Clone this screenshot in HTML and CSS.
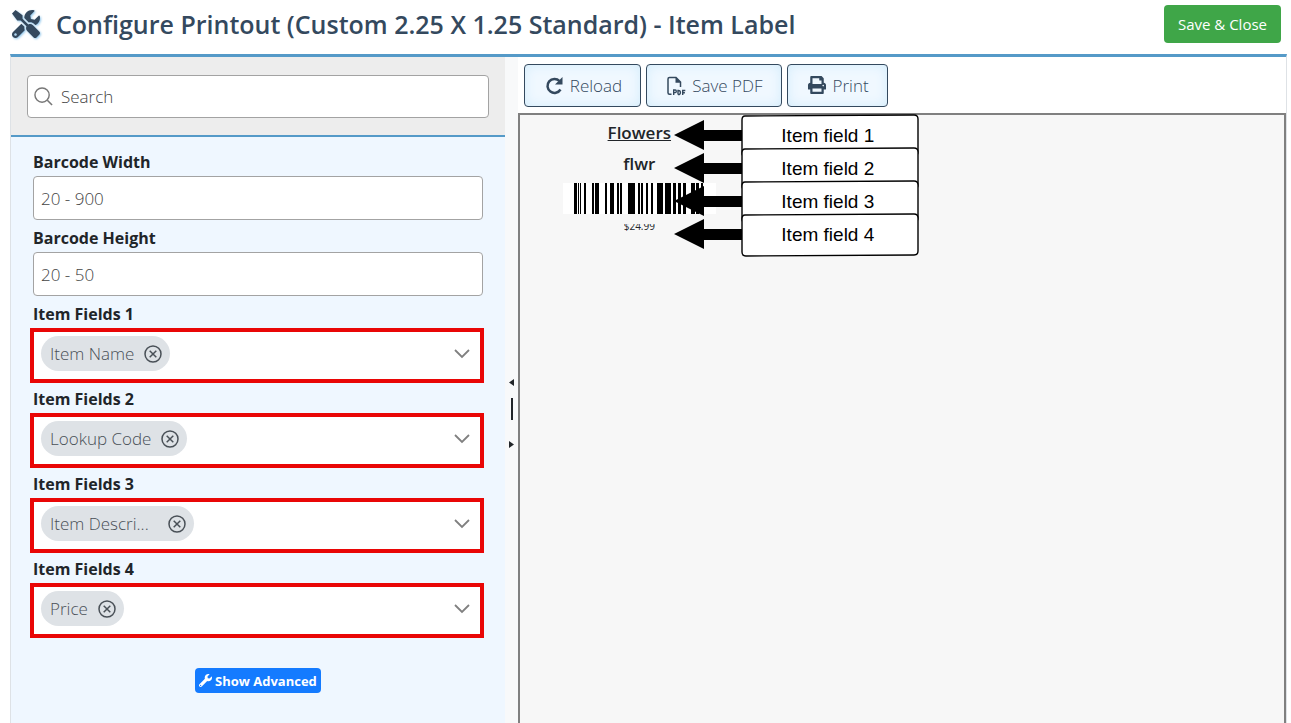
FILE: index.html
```html
<!DOCTYPE html>
<html lang="en">
<head>
  <meta charset="UTF-8">
  <meta name="viewport" content="width=device-width, initial-scale=1.0">
  <title>Configure Printout</title>
  <link rel="stylesheet" href="styles.css">
</head>
<body>
  <svg class="sprite" aria-hidden="true">
    <symbol id="icon-chevron" viewBox="0 0 16 10">
      <path d="M1 1l7 7 7-7" fill="none" stroke="#808080" stroke-width="1.8"/>
    </symbol>
    <symbol id="icon-remove" viewBox="0 0 18 18">
      <circle cx="9" cy="9" r="8" fill="none" stroke="#495057" stroke-width="1.5"/>
      <path d="M5.700 5.700l6.600 6.600M12.300 5.700l-6.600 6.600" stroke="#495057" stroke-width="1.500"/>
    </symbol>
    <symbol id="icon-wrench" viewBox="0 0 512 512">
      <path fill="currentColor" d="M507.730 109.100c-2.240-9.030-13.540-12.090-20.120-5.510l-74.360 74.360-67.880-11.310-11.310-67.880 74.360-74.360c6.620-6.620 3.430-17.900-5.660-20.160-47.380-11.740-99.550.910-136.580 37.930-39.640 39.640-50.550 97.100-34.050 147.200L18.740 402.760c-24.990 24.990-24.990 65.510 0 90.500 24.990 24.990 65.510 24.990 90.500 0l213.210-213.210c50.120 16.710 107.470 5.680 147.370-34.220 37.070-37.070 49.700-89.320 37.910-136.730zM64 472c-13.250 0-24-10.750-24-24 0-13.260 10.750-24 24-24s24 10.740 24 24c0 13.250-10.750 24-24 24z"/>
    </symbol>
    <symbol id="callout-shape" viewBox="0 0 246 46">
      <path d="M0 22L30 7v10h38v11H30v9z"/>
      <path d="M71 3l169-1q4 0 4 4v33q0 4-4 4l-168 1q-4 0-4-4V7q0-4 3-4z" fill="#fff" stroke="#000" stroke-width="1.4"/>
    </symbol>
  </svg>

  <header class="page-header">
    <svg class="title-icon" viewBox="0 0 512 512" aria-hidden="true">
      <path fill="#34495e" d="M501.100 395.700L384 278.600c-23.100-23.100-57.600-27.600-85.400-13.900L192 158.100V96L64 0 0 64l96 128h62.100l106.600 106.600c-13.600 27.800-9.200 62.300 13.900 85.400l117.100 117.100c14.600 14.600 38.200 14.600 52.700 0l52.700-52.700c14.500-14.600 14.500-38.200 0-52.700zM331.700 225c28.300 0 54.900 11 74.900 31l19.400 19.400c15.800-6.900 30.800-16.500 43.800-29.500 37.100-37.100 49.700-89.300 37.900-136.700-2.200-9-13.500-12.100-20.100-5.500l-74.400 74.400-67.900-11.300L334 98.900l74.400-74.400c6.600-6.600 3.400-17.900-5.700-20.200-47.400-11.700-99.600.900-136.600 37.900-28.500 28.500-41.900 66.100-41.200 103.600l82.100 82.100c8.100-1.900 16.500-2.900 24.700-2.900zm-103.900 82l-56.700-56.700L18.700 402.800c-25 25-25 65.500 0 90.500s65.500 25 90.500 0l123.600-123.600c-7.600-19.900-9.900-41.600-5-62.700zM64 472c-13.200 0-24-10.800-24-24 0-13.300 10.700-24 24-24s24 10.700 24 24c0 13.200-10.700 24-24 24z"/>
    </svg>
    <h1>Configure Printout (Custom 2.25 X 1.25 Standard) - Item Label</h1>
    <button type="button" class="btn-save">Save &amp; Close</button>
  </header>

  <main class="workspace">
    <form class="sidebar">
      <div class="search-bar">
        <div class="search-box">
          <svg class="search-icon" viewBox="0 0 20 20" aria-hidden="true">
            <circle cx="8.500" cy="8.500" r="7.500" fill="none" stroke="#777" stroke-width="1.500"/>
            <path d="M14 14l5 5" stroke="#777" stroke-width="1.700"/>
          </svg>
          <input type="search" class="text-input search-input" placeholder="Search" aria-label="Search">
        </div>
      </div>

      <div class="fields">
        <div class="field">
          <label for="barcodeWidth">Barcode Width</label>
          <input type="text" class="text-input" id="barcodeWidth" placeholder="20 - 900">
        </div>

        <div class="field">
          <label for="barcodeHeight">Barcode Height</label>
          <input type="text" class="text-input" id="barcodeHeight" placeholder="20 - 50">
        </div>

        <div class="field field-picker">
          <label for="itemFields1">Item Fields 1</label>
          <div class="picker">
            <select id="itemFields1"><option></option></select>
            <span class="chip">Item Name
              <button type="button" aria-label="Remove Item Name"><svg><use href="#icon-remove"/></svg></button>
            </span>
            <svg class="chevron"><use href="#icon-chevron"/></svg>
          </div>
        </div>

        <div class="field field-picker">
          <label for="itemFields2">Item Fields 2</label>
          <div class="picker">
            <select id="itemFields2"><option></option></select>
            <span class="chip">Lookup Code
              <button type="button" aria-label="Remove Lookup Code"><svg><use href="#icon-remove"/></svg></button>
            </span>
            <svg class="chevron"><use href="#icon-chevron"/></svg>
          </div>
        </div>

        <div class="field field-picker">
          <label for="itemFields3">Item Fields 3</label>
          <div class="picker">
            <select id="itemFields3"><option></option></select>
            <span class="chip chip-cut">Item Descri...
              <button type="button" aria-label="Remove Item Description"><svg><use href="#icon-remove"/></svg></button>
            </span>
            <svg class="chevron"><use href="#icon-chevron"/></svg>
          </div>
        </div>

        <div class="field field-picker">
          <label for="itemFields4">Item Fields 4</label>
          <div class="picker">
            <select id="itemFields4"><option></option></select>
            <span class="chip">Price
              <button type="button" aria-label="Remove Price"><svg><use href="#icon-remove"/></svg></button>
            </span>
            <svg class="chevron"><use href="#icon-chevron"/></svg>
          </div>
        </div>

        <button type="button" class="btn-advanced"><svg><use href="#icon-wrench"/></svg>Show Advanced</button>
      </div>
    </form>

    <div class="gutter">
      <svg viewBox="0 0 6 70" aria-hidden="true">
        <path d="M5 1v7L0 4.500zM2 20h2v22H2zM0 63v7l5-3.500z" fill="#212529"/>
      </svg>
    </div>

    <section class="preview">
      <div class="toolbar">
        <button type="button" class="btn-tool">
          <svg viewBox="0 0 20 20" aria-hidden="true">
            <path d="M16.500 13.500A7 7 0 1 1 15.500 5" fill="none" stroke="currentColor" stroke-width="2.500"/>
            <path d="M18.500 1v7.500H11z" fill="currentColor"/>
          </svg>
          Reload
        </button>
        <button type="button" class="btn-tool">
          <svg viewBox="0 0 20 20" aria-hidden="true">
            <path d="M5.500 18.200H3.500Q2 18.200 2 16.700V3Q2 1.500 3.500 1.500H10L14.500 6V11" fill="none" stroke="currentColor" stroke-width="1.500"/>
            <path d="M9.500 1l5.700 5.700H9.500z" fill="currentColor"/>
            <path d="M7.700 19v-5h1.600q1 0 1 1.300t-1 1.300H7.700M12 18.500v-4q2.400-.200 2.400 2t-2.400 2M16.700 19v-4.500h2.600M16.700 16.700h2.200" fill="none" stroke="currentColor" stroke-width="1.400"/>
          </svg>
          Save PDF
        </button>
        <button type="button" class="btn-tool">
          <svg viewBox="-28 0 568 568" aria-hidden="true">
            <path fill="currentColor" d="M448 192V77.250c0-8.490-3.370-16.620-9.370-22.630L393.370 9.370c-6-6-14.140-9.370-22.630-9.370H96C78.330 0 64 14.330 64 32v160c-35.350 0-64 28.650-64 64v112c0 8.840 7.160 16 16 16h48v96c0 17.670 14.330 32 32 32h320c17.670 0 32-14.330 32-32v-96h48c8.840 0 16-7.160 16-16V256c0-35.350-28.650-64-64-64zm-64 256H128v-96h256v96zm0-224H128V64h192v48c0 8.840 7.160 16 16 16h48v96zm48 72c-13.250 0-24-10.750-24-24 0-13.260 10.750-24 24-24s24 10.740 24 24c0 13.250-10.750 24-24 24z"/>
          </svg>
          Print
        </button>
      </div>

      <div class="frame">
        <div class="item-label">
          <span class="item-name">Flowers</span>
          <span class="item-code">flwr</span>
          <svg class="barcode" viewBox="0 0 153 31" role="img" aria-label="Barcode">
            <path d="M11 0h3v31h-3zM15 0h1v31h-1zM17 0h1v31h-1zM21 0h2v31h-2zM29 0h2v31h-2zM32 0h4v31h-4zM42 0h2v31h-2zM47 0h4v31h-4zM54 0h2v31h-2zM57 0h2v31h-2zM65 0h7v31h-7zM75 0h2v31h-2zM78 0h2v31h-2zM83 0h2v31h-2zM88 0h2v31h-2zM94 0h6v31h-6zM102 0h6v31h-6zM110 0h3v31h-3zM115 0h3v31h-3zM120 0h3v31h-3zM128 0h4v31h-4zM133 0h3v31h-3zM138 0h2v31h-2z"/>
          </svg>
          <span class="item-price">$24.99</span>
        </div>

        <div class="callouts">
          <div class="callout"><svg><use href="#callout-shape"/></svg><span>Item field 1</span></div>
          <div class="callout"><svg><use href="#callout-shape"/></svg><span>Item field 2</span></div>
          <div class="callout"><svg><use href="#callout-shape"/></svg><span>Item field 3</span></div>
          <div class="callout"><svg><use href="#callout-shape"/></svg><span>Item field 4</span></div>
        </div>
      </div>
    </section>
  </main>
</body>
</html>
```
FILE: styles.css
```css
* {
  margin: 0;
  padding: 0;
  box-sizing: border-box;
}

body {
  font-family: 'Segoe UI', 'Open Sans', 'Noto Sans', sans-serif;
  font-size: 17px;
  color: #212529;
  background: #fff;
  min-height: 100vh;
  padding: 0 4px 0 10px;
  display: flex;
  flex-direction: column;
}

button,
input,
select {
  font: inherit;
}

button {
  cursor: pointer;
}

.sprite {
  display: none;
}

/* header */
.page-header {
  display: flex;
  align-items: center;
  height: 54px;
  padding: 0 6px 6px 2px;
}

.title-icon {
  width: 28px;
  height: 28px;
  margin-right: 16px;
  filter: drop-shadow(1px 1px 1px #8cc4ea);
}

.page-header h1 {
  flex: 1;
  color: #34495e;
  font-size: 25px;
  font-weight: 600;
  white-space: nowrap;
}

.btn-save {
  height: 38px;
  padding: 0 14px;
  border: none;
  border-radius: 4px;
  background: #3fa648;
  color: #fff;
  font-size: 15px;
}

/* workspace */
.workspace {
  flex: 1;
  display: grid;
  grid-template-columns: 9fr 13px 14fr;
  border: 1px solid #dee2e6;
  border-top: 3px solid #559ac8;
  border-bottom: none;
}

.sidebar {
  background: #eff7ff;
}

.search-bar {
  padding: 18px 16px 17px;
  background: #ededed;
  border-bottom: 2px solid #559ac8;
}

.search-box {
  display: grid;
  align-items: center;
}

.search-box > * {
  grid-area: 1 / 1;
}

.search-icon {
  width: 19px;
  height: 19px;
  margin-left: 7px;
  z-index: 1;
}

.text-input {
  width: 100%;
  height: 44px;
  padding: 0 7px;
  border: 1px solid #a3a3a3;
  border-radius: 4px;
  background: #fff;
  font-weight: 300;
}

.text-input::placeholder {
  color: #444;
}

.search-input {
  height: 43px;
  padding-left: 33px;
}

.fields {
  display: flex;
  flex-direction: column;
  padding: 13px 22px;
}

.field {
  margin-bottom: 6px;
}

.field label {
  display: block;
  line-height: 24px;
  font-size: 16px;
  font-weight: 700;
  margin-bottom: 2px;
}

.field .text-input {
  display: block;
}

.field-picker {
  margin-bottom: 4px;
}

.picker {
  display: grid;
  grid-template-columns: 1fr auto;
  align-items: start;
  height: 55px;
  margin: 0 -1px 0 -3px;
  padding: 4px 10px 0 7px;
  border: 4px solid #e90606;
  background: #fff;
}

.picker select {
  grid-area: 1 / 1 / 2 / 3;
  height: 35px;
  border: none;
  background: none;
  appearance: none;
}

.chip {
  grid-area: 1 / 1;
  justify-self: start;
  display: flex;
  align-items: center;
  gap: 10px;
  height: 35px;
  padding: 0 8px 0 9px;
  border-radius: 18px;
  background: #dee2e6;
  color: #495057;
  font-weight: 300;
}

.chip-cut {
  gap: 19px;
}

.chip button {
  display: flex;
  border: none;
  background: none;
}

.chip svg {
  width: 18px;
  height: 18px;
}

.chevron {
  grid-area: 1 / 2;
  width: 16px;
  height: 10px;
  margin-top: 13px;
  pointer-events: none;
}

.btn-advanced {
  align-self: center;
  display: flex;
  align-items: center;
  gap: 3px;
  height: 25px;
  margin-top: 26px;
  padding: 0 4px;
  border: none;
  border-radius: 4px;
  background: #147bff;
  color: #fff;
  font-size: 13px;
  font-weight: 700;
}

.btn-advanced svg {
  width: 13px;
  height: 13px;
}

.gutter {
  display: flex;
  align-items: center;
  justify-content: center;
  padding-left: 1px;
  background: #f8f9fa;
}

.gutter svg {
  width: 6px;
  height: 70px;
  margin-top: 46px;
}

/* preview */
.preview {
  display: flex;
  flex-direction: column;
}

.toolbar {
  display: flex;
  gap: 5px;
  padding: 7px 6px 6px;
}

.btn-tool {
  display: flex;
  align-items: center;
  gap: 6px;
  height: 43px;
  padding: 0 18px 0 19px;
  border: 1px solid #34495e;
  border-radius: 4px;
  background: #f0f8ff;
  box-shadow: inset 0 0 12px #d2ecfb;
  color: #34495e;
  font-weight: 300;
}

.btn-tool svg {
  width: 20px;
  height: 20px;
}

.frame {
  position: relative;
  flex: 1;
  border: 2px solid #808080;
  border-bottom: none;
  background: #f7f7f7;
}

.item-label {
  display: flex;
  flex-direction: column;
  align-items: center;
  width: 153px;
  margin-left: 43px;
  padding-top: 2px;
  font-weight: 600;
}

.item-name,
.item-code {
  line-height: 31px;
}

.item-name {
  text-decoration: underline;
}

.barcode {
  width: 153px;
  height: 31px;
  margin-top: 4px;
  background: #fff;
}

.item-price {
  display: flex;
  align-items: flex-end;
  height: 8px;
  margin-top: 10px;
  overflow: hidden;
  font-size: 10px;
  font-weight: 400;
  line-height: 12px;
}

/* arrows lie over the printed label */
.callouts {
  position: absolute;
  top: -2px;
  left: 154px;
}

.callout {
  display: grid;
  align-items: center;
  height: 33px;
  color: #000;
  font-family: Arial, 'Liberation Sans', sans-serif;
  font-size: 19px;
}

.callout > * {
  grid-area: 1 / 1;
}

.callout svg {
  width: 246px;
  height: 46px;
}

.callout span {
  margin-left: 62px;
  text-align: center;
}
```
